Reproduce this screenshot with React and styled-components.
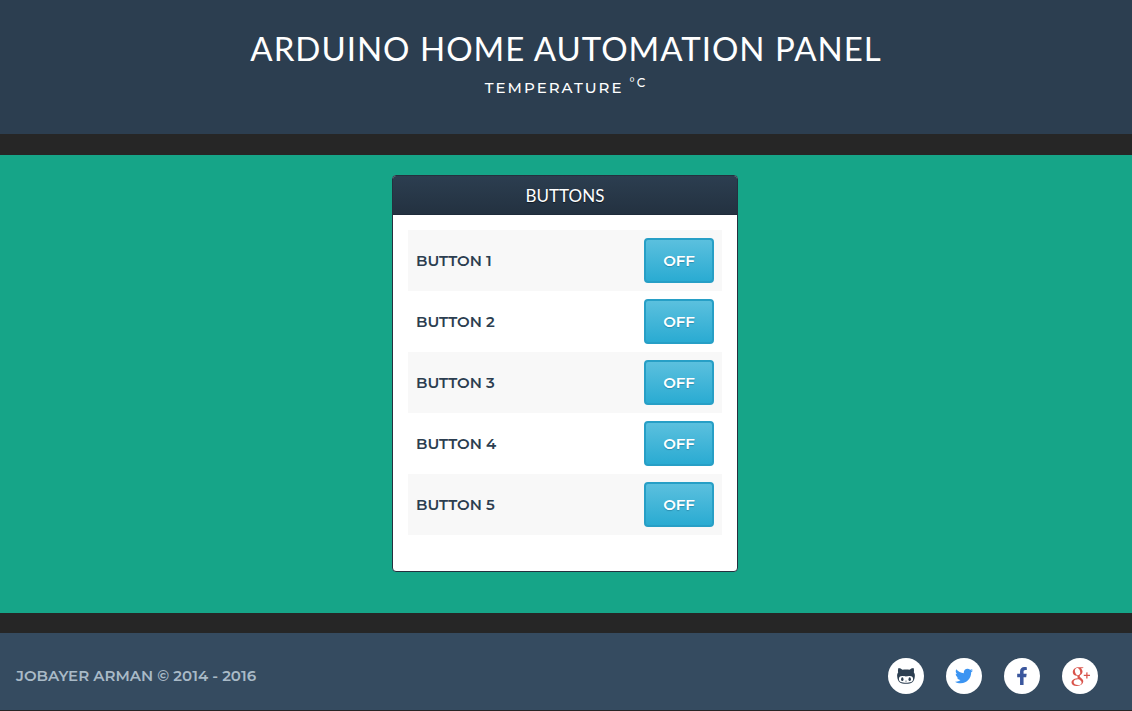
import React, { useState } from "react";
import styled, { createGlobalStyle } from "styled-components";
import { FaTwitter, FaFacebookF } from "react-icons/fa";
import { TiSocialGooglePlus } from "react-icons/ti";

const GlobalStyle = createGlobalStyle`
  * { box-sizing: border-box; }
  body {
    margin: 0;
    background: #262626;
    color: #2c3e50;
    font-family: Montserrat, Inter, "Liberation Sans", sans-serif;
    font-size: 15px;
    font-weight: 600;
    line-height: 20px;
  }
`;

const Page = styled.div`
  display: flex;
  flex-direction: column;
  gap: 20px;
  text-transform: uppercase;
`;

const Header = styled.header`
  background: #2c3e50;
  color: #fff;
  text-align: center;
  padding: 27px 16px 36px;
  border-bottom: 1px solid #262626;
`;

const Title = styled.h1`
  margin: 0;
  font-family: Lato, sans-serif;
  font-size: 33px;
  line-height: 42px;
  font-weight: 400;
  letter-spacing: 1px;
`;

const Temperature = styled.p`
  margin: 9px 0 0;
  font-size: 15px;
  font-weight: 500;
  letter-spacing: 2px;

  sup {
    font-size: 12px;
    line-height: 0;
    vertical-align: 6px;
  }
`;

const Main = styled.main`
  background: #16a588;
  padding: 20px 16px 41px;
  display: flex;
  justify-content: center;
`;

const Panel = styled.section`
  width: 100%;
  max-width: 346px;
  margin-right: 2px;
  background: #fff;
  border: 1px solid #25303f;
  border-radius: 4px;
  overflow: hidden;
`;

const PanelTitle = styled.h2`
  margin: 0;
  padding: 8px 0 7px;
  background: linear-gradient(#2c3e50, #233140);
  color: #fff;
  font-family: Lato, sans-serif;
  font-size: 17px;
  line-height: 24px;
  font-weight: 400;
  text-align: center;
  text-shadow: 0 1px 1px #111a24;
  box-shadow: inset 0 -1px #1f2b3a;
`;

const Rows = styled.ul`
  list-style: none;
  margin: 0;
  padding: 15px 15px 36px;
`;

const Row = styled.li`
  display: flex;
  align-items: center;
  justify-content: space-between;
  padding: 8px;

  &:nth-child(odd) { background: #f8f8f8; }
`;

const Toggle = styled.button`
  width: 70px;
  height: 45px;
  padding: 0;
  border: 2px solid #279fc6;
  border-radius: 4px;
  background: linear-gradient(#5bc0de, #2aabd2);
  color: #fff;
  font: inherit;
  text-transform: inherit;
  text-shadow: 0 1px 1px #2b8fb0;
  cursor: pointer;
`;

const Footer = styled.footer`
  display: flex;
  align-items: center;
  justify-content: space-between;
  padding: 25px 34px 16px 16px;
  background: #354b60;
  color: #a9bac7;
`;

const Socials = styled.nav`
  display: flex;
  gap: 22px;
`;

const SocialLink = styled.a`
  display: grid;
  place-items: center;
  width: 36px;
  height: 36px;
  border-radius: 50%;
  background: #fff;
  color: ${(p) => p.$color};
`;

const Octocat = () => (
  <svg width="18" height="16" viewBox="0 0 18 16" aria-hidden="true">
    <path
      fill="currentColor"
      fillRule="evenodd"
      d="M1.500 0C3 .1 4.500.9 5.500 1.800 7.500 1.300 10.500 1.300 12.500 1.800 13.500.9 15 .1 16.500 0 17.200 1.600 17.100 3.200 16.800 4.300 17.700 5.400 18 6.900 17.800 8.500 17.500 13.800 14.500 15.800 9 15.800S.5 13.800.2 8.500C0 6.900.3 5.400 1.200 4.300.9 3.200.8 1.600 1.500 0ZM5.200 8C3 8 1.900 9.300 1.900 11 1.900 13.900 4.500 14.700 9 14.700S16.100 13.900 16.100 11C16.100 9.300 15 8 12.800 8 11.300 8 10.500 8.400 9 8.400S6.700 8 5.200 8Z"
    />
    <ellipse cx="5.300" cy="11.200" rx="1.200" ry="1.900" fill="currentColor" />
    <ellipse cx="12.700" cy="11.200" rx="1.200" ry="1.900" fill="currentColor" />
    <path d="M8.200 13Q9 13.600 9.800 13" fill="none" stroke="currentColor" strokeWidth=".6" />
  </svg>
);

const socials = [
  { name: "GitHub", color: "#2c3e50", icon: <Octocat /> },
  { name: "Twitter", color: "#3b94f2", icon: <FaTwitter size={18} /> },
  { name: "Facebook", color: "#3b579d", icon: <FaFacebookF size={18} /> },
  { name: "Google Plus", color: "#d9534a", icon: <TiSocialGooglePlus size={30} /> },
];

function SwitchRow({ number }) {
  const [on, setOn] = useState(false);
  const id = `switch-${number}`;
  return (
    <Row>
      <label htmlFor={id}>Button {number}</label>
      <Toggle id={id} type="button" aria-pressed={on} onClick={() => setOn(!on)}>
        {on ? "On" : "Off"}
      </Toggle>
    </Row>
  );
}

export default function App() {
  return (
    <>
      <GlobalStyle />
      <Page>
        <Header>
          <Title>Arduino Home Automation Panel</Title>
          <Temperature>
            Temperature <sup>°C</sup>
          </Temperature>
        </Header>
        <Main>
          <Panel>
            <PanelTitle>Buttons</PanelTitle>
            <Rows>
              {[1, 2, 3, 4, 5].map((n) => (
                <SwitchRow key={n} number={n} />
              ))}
            </Rows>
          </Panel>
        </Main>
        <Footer>
          <span>Jobayer Arman © 2014 - 2016</span>
          <Socials aria-label="Social links">
            {socials.map((s) => (
              <SocialLink key={s.name} href="#" $color={s.color} aria-label={s.name}>
                {s.icon}
              </SocialLink>
            ))}
          </Socials>
        </Footer>
      </Page>
    </>
  );
}
